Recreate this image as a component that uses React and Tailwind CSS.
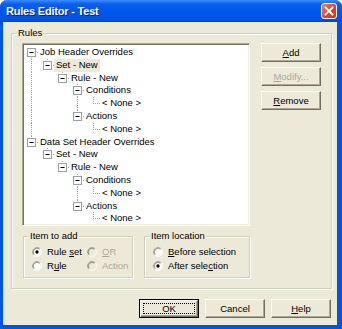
import React from "react";

const C = [6, 22, 37, 52, 68];
const H = 12.8;

const rows = [
  { l: 0, t: "Job Header Overrides", btn: true, last: false, first: true, pass: [] },
  { l: 1, t: "Set - New", btn: true, last: true, pass: [0], sel: true },
  { l: 2, t: "Rule - New", btn: true, last: true, pass: [0] },
  { l: 3, t: "Conditions", btn: true, last: false, pass: [0] },
  { l: 4, t: "< None >", btn: false, last: true, pass: [0, 3] },
  { l: 3, t: "Actions", btn: true, last: true, pass: [0] },
  { l: 4, t: "< None >", btn: false, last: true, pass: [0] },
  { l: 0, t: "Data Set Header Overrides", btn: true, last: true, pass: [] },
  { l: 1, t: "Set - New", btn: true, last: true, pass: [] },
  { l: 2, t: "Rule - New", btn: true, last: true, pass: [] },
  { l: 3, t: "Conditions", btn: true, last: false, pass: [] },
  { l: 4, t: "< None >", btn: false, last: true, pass: [3] },
  { l: 3, t: "Actions", btn: true, last: true, pass: [] },
  { l: 4, t: "< None >", btn: false, last: true, pass: [] },
];

function TreeRow({ r }) {
  const c = C[r.l];
  const w = c + 7;
  const mid = H / 2;
  const x = c + 0.5;
  const dot = { stroke: "#A0A0A0", strokeWidth: 1, strokeDasharray: "1 1" };
  return (
    <div className="flex items-center h-[12.8px]">
      <svg width={w} height={H} className="shrink-0 block">
        {r.pass.map((k) => (
          <line key={k} x1={C[k] + 0.5} x2={C[k] + 0.5} y1={0} y2={H} {...dot} />
        ))}
        <line x1={x} x2={x} y1={r.first ? mid : 0} y2={r.last ? mid : H} {...dot} />
        <line x1={c} x2={w} y1={6.5} y2={6.5} {...dot} />
        {r.btn && (
          <g>
            <rect x={c - 3.5} y={2.5} width={8} height={8} fill="#fff" stroke="#98A0A8" strokeWidth="1" />
            <line x1={c - 1.5} x2={c + 2.5} y1={6.5} y2={6.5} stroke="#000" strokeWidth="1" />
          </g>
        )}
      </svg>
      <span
        className={
          "px-[2px] h-[12.8px] leading-[12.8px] whitespace-nowrap text-black " +
          (r.sel ? "bg-[#ECE9D8]" : "")
        }
      >
        {r.t}
      </span>
    </div>
  );
}

function Btn({ children, disabled, isDefault, className = "" }) {
  if (isDefault) {
    return (
      <div className={"h-[19px] border border-black bg-[#ECE9D8] " + className}>
        <div className="h-full border-t border-l border-white border-r border-b border-r-[#716F64] border-b-[#716F64] shadow-[inset_-1px_-1px_0_#ACA899] p-[2px]">
          <div className="h-full border border-dotted border-black flex items-center justify-center leading-none">
            {children}
          </div>
        </div>
      </div>
    );
  }
  return (
    <div
      className={
        "h-[19px] bg-[#ECE9D8] border-t border-l border-white border-r border-b border-r-[#716F64] border-b-[#716F64] shadow-[inset_-1px_-1px_0_#ACA899] flex items-center justify-center leading-none " +
        (disabled ? "text-[#ACA899] " : "text-black ") +
        className
      }
    >
      {children}
    </div>
  );
}

function Radio({ checked, disabled }) {
  const tl = (r) => {
    const d = r * 0.7071;
    return `M ${6 - d} ${6 + d} A ${r} ${r} 0 0 1 ${6 + d} ${6 - d}`;
  };
  const br = (r) => {
    const d = r * 0.7071;
    return `M ${6 + d} ${6 - d} A ${r} ${r} 0 0 1 ${6 - d} ${6 + d}`;
  };
  return (
    <svg width="10" height="10" viewBox="0 0 12 12" className="shrink-0 block">
      <circle cx="6" cy="6" r="5.5" fill={disabled ? "#ECE9D8" : "#fff"} />
      <path d={tl(5.5)} fill="none" stroke="#ACA899" strokeWidth="1" />
      <path d={br(5.5)} fill="none" stroke="#fff" strokeWidth="1" />
      <path d={tl(4.5)} fill="none" stroke="#716F64" strokeWidth="1" />
      <path d={br(4.5)} fill="none" stroke="#F1EFE2" strokeWidth="1" />
      {checked && <circle cx="6" cy="6" r="2" fill={disabled ? "#ACA899" : "#000"} />}
    </svg>
  );
}

function RadioItem({ checked, disabled, children, className = "" }) {
  return (
    <div className={"flex items-center gap-[5px] " + className}>
      <Radio checked={checked} disabled={disabled} />
      <span className={"whitespace-nowrap leading-none " + (disabled ? "text-[#ACA899]" : "text-black")}>
        {children}
      </span>
    </div>
  );
}

function Group({ label, className = "", children }) {
  return (
    <div
      className={
        "relative border border-[#D0D0BF] shadow-[inset_1px_1px_0_#fff,1px_1px_0_#fff] " + className
      }
    >
      <span className="absolute top-[-7px] left-[5px] px-[1px] bg-[#ECE9D8] leading-[12px] text-black whitespace-nowrap">
        {label}
      </span>
      {children}
    </div>
  );
}

const U = ({ children }) => <span className="underline underline-offset-[1px]">{children}</span>;

export default function App() {
  return (
    <div className="w-[342px] h-[329px] flex flex-col bg-[#0055E5] rounded-t-[7px] overflow-hidden font-['Liberation_Sans',Arial,sans-serif] text-[9.5px] select-none">
      <div className="h-[22px] shrink-0 flex items-center pl-[6px] pr-[5px] bg-[linear-gradient(to_bottom,#3C8EFF_0%,#0A5FF0_18%,#0058E8_50%,#0055E5_80%,#0048D8_100%)]">
        <span className="text-white font-bold text-[11px] tracking-[-0.2px] [text-shadow:1px_1px_0_#0A1E8C]">
          Rules Editor - Test
        </span>
        <div className="ml-auto w-[16px] h-[16px] rounded-[3px] border border-white bg-[linear-gradient(135deg,#E8836A_0%,#D9482A_55%,#C23A1E_100%)] flex items-center justify-center">
          <svg width="10" height="10" viewBox="0 0 10 10">
            <path d="M1.5 1.5 L8.5 8.5 M8.5 1.5 L1.5 8.5" stroke="#fff" strokeWidth="1.8" strokeLinecap="square" />
          </svg>
        </div>
      </div>
      <div className="flex-1 ml-[3px] mr-[5px] mb-[4px] bg-[#ECE9D8] flex flex-col pl-[8px] pr-[6px] pt-[11px]">
        <Group label="Rules" className="h-[256px] w-[321px] pl-[10px] pt-[9px] pr-[9px] pb-[9px] flex gap-[11px]">
          <div className="w-[228px] flex flex-col">
            <div className="h-[183px] bg-white border border-t-[#ACA899] border-l-[#ACA899] border-r-white border-b-white shadow-[inset_1px_1px_0_#716F64,inset_-1px_-1px_0_#F1EFE2] pl-[2px] pt-[2px] overflow-hidden">
              {rows.map((r, i) => (
                <TreeRow key={i} r={r} />
              ))}
            </div>
            <div className="mt-[10px] ml-[1px] flex gap-[11px]">
              <Group label="Item to add" className="w-[110px] h-[42px] pt-[10px] pl-[8px] flex flex-col gap-[4px]">
                <div className="flex">
                  <RadioItem checked className="w-[55px]">
                    Rule <U>s</U>et
                  </RadioItem>
                  <RadioItem disabled>
                    <U>O</U>R
                  </RadioItem>
                </div>
                <div className="flex">
                  <RadioItem className="w-[55px]">
                    R<U>u</U>le
                  </RadioItem>
                  <RadioItem disabled>
                    Action
                  </RadioItem>
                </div>
              </Group>
              <Group label="Item location" className="w-[106px] h-[42px] pt-[10px] pl-[8px] flex flex-col gap-[4px]">
                <RadioItem>
                  <U>B</U>efore selection
                </RadioItem>
                <RadioItem checked>
                  After sele<U>c</U>tion
                </RadioItem>
              </Group>
            </div>
          </div>
          <div className="w-[60px] flex flex-col gap-[5px]">
            <Btn>
              <U>A</U>dd
            </Btn>
            <Btn disabled>
              <U>M</U>odify...
            </Btn>
            <Btn>
              <U>R</U>emove
            </Btn>
          </div>
        </Group>
        <div className="mt-[10px] flex justify-end gap-[6px]">
          <Btn isDefault className="w-[60px]">
            OK
          </Btn>
          <Btn className="w-[60px]">Cancel</Btn>
          <Btn className="w-[60px]">
            <U>H</U>elp
          </Btn>
        </div>
      </div>
    </div>
  );
}
